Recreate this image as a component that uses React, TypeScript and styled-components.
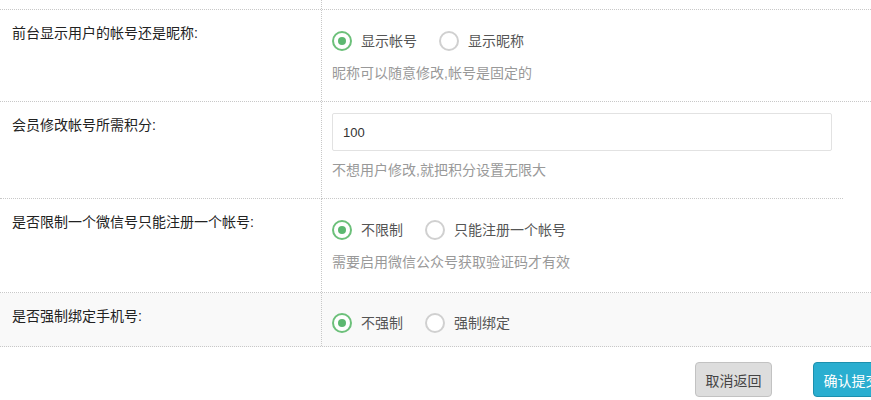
import React from "react";
import styled, { createGlobalStyle } from "styled-components";

const Global = createGlobalStyle`
  html, body { margin: 0; padding: 0; background: #fff; overflow: hidden; }
  body { font-family: "Liberation Sans", "Noto Sans CJK SC", sans-serif; }
`;

const Page = styled.div`
  width: 871px;
  display: flex;
  flex-direction: column;
`;

const Row = styled.div<{ $gray?: boolean; $short?: boolean }>`
  display: grid;
  grid-template-columns: 322px 1fr;
  background: ${(p) => (p.$gray ? "#f9f9f9" : "transparent")};
  border-bottom: ${(p) => (p.$short ? "none" : "1px dotted #c8c8c8")};
`;

const LabelCell = styled.div<{ $h?: number; $line?: boolean }>`
  box-sizing: border-box;
  border-right: 1px dotted #c8c8c8;
  padding: 13px 12px 0;
  font-size: 14px;
  line-height: 20px;
  color: #222;
  ${(p) => (p.$h !== undefined ? `height: ${p.$h}px; padding: 0;` : "")}
  ${(p) => (p.$line ? "border-bottom: 1px dotted #c8c8c8;" : "")}
`;

const ContentCell = styled.div<{ $pt: number; $pb: number; $short?: boolean }>`
  padding: ${(p) => p.$pt}px 10px ${(p) => p.$pb}px;
  ${(p) => (p.$short ? "margin-right: 28px; border-bottom: 1px dotted #c8c8c8;" : "")}
`;

const Radios = styled.div`
  display: flex;
  align-items: center;
  height: 20px;
`;

const RadioItem = styled.label`
  display: flex;
  align-items: center;
  margin-right: 22px;
  font-size: 14px;
  color: #555;
  line-height: 20px;
`;

const Circle = styled.span<{ $on?: boolean }>`
  box-sizing: border-box;
  width: 20px;
  height: 20px;
  border-radius: 50%;
  border: 2px solid ${(p) => (p.$on ? "#6cc07a" : "#d0d0d0")};
  margin-right: 9px;
  display: flex;
  align-items: center;
  justify-content: center;
  background: #fff;
  &::after {
    content: "";
    width: 8px;
    height: 8px;
    border-radius: 50%;
    background: ${(p) => (p.$on ? "#5cb870" : "transparent")};
  }
`;

const Hint = styled.div<{ $mt: number }>`
  margin-top: ${(p) => p.$mt}px;
  font-size: 14px;
  line-height: 20px;
  color: #999;
`;

const Input = styled.div`
  box-sizing: border-box;
  width: 500px;
  height: 38px;
  border: 1px solid #e2e2e2;
  border-radius: 2px;
  background: #fff;
  padding: 0 10px;
  display: flex;
  align-items: center;
  font-size: 13px;
  color: #333;
`;

const Footer = styled.div`
  display: flex;
  gap: 41px;
  padding: 15px 0 0 695px;
`;

const Button = styled.button<{ $primary?: boolean }>`
  flex: none;
  width: 77px;
  height: 35px;
  border-radius: 4px;
  font-family: inherit;
  font-size: 14px;
  padding: 0;
  border: 1px solid ${(p) => (p.$primary ? "#1c90ae" : "#c2c2c2")};
  background: ${(p) => (p.$primary ? "#2aaed0" : "#dddddd")};
  color: ${(p) => (p.$primary ? "#fff" : "#444")};
`;

type Opt = { label: string; on?: boolean };

const RadioGroup = ({ options }: { options: Opt[] }) => (
  <Radios>
    {options.map((o) => (
      <RadioItem key={o.label}>
        <Circle $on={o.on} />
        {o.label}
      </RadioItem>
    ))}
  </Radios>
);

export default function App() {
  return (
    <Page>
      <Global />
      <Row>
        <LabelCell $h={9} />
        <div />
      </Row>
      <Row>
        <LabelCell>前台显示用户的帐号还是昵称:</LabelCell>
        <ContentCell $pt={21} $pb={18}>
          <RadioGroup options={[{ label: "显示帐号", on: true }, { label: "显示昵称" }]} />
          <Hint $mt={12}>昵称可以随意修改,帐号是固定的</Hint>
        </ContentCell>
      </Row>
      <Row $short>
        <LabelCell $line>会员修改帐号所需积分:</LabelCell>
        <ContentCell $pt={11} $pb={18} $short>
          <Input>100</Input>
          <Hint $mt={9}>不想用户修改,就把积分设置无限大</Hint>
        </ContentCell>
      </Row>
      <Row>
        <LabelCell>是否限制一个微信号只能注册一个帐号:</LabelCell>
        <ContentCell $pt={21} $pb={20}>
          <RadioGroup options={[{ label: "不限制", on: true }, { label: "只能注册一个帐号" }]} />
          <Hint $mt={12}>需要启用微信公众号获取验证码才有效</Hint>
        </ContentCell>
      </Row>
      <Row $gray>
        <LabelCell>是否强制绑定手机号:</LabelCell>
        <ContentCell $pt={20} $pb={13}>
          <RadioGroup options={[{ label: "不强制", on: true }, { label: "强制绑定" }]} />
        </ContentCell>
      </Row>
      <Footer>
        <Button>取消返回</Button>
        <Button $primary>确认提交</Button>
      </Footer>
    </Page>
  );
}
